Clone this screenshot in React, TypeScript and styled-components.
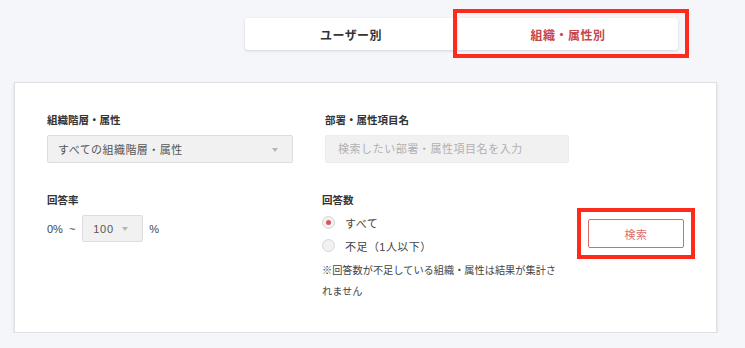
import styled, { createGlobalStyle } from 'styled-components'

const GlobalStyle = createGlobalStyle`
  html, body {
    margin: 0;
    padding: 0;
    background: #f5f6f9;
    font-family: "Liberation Sans", "Noto Sans CJK JP", sans-serif;
    color: #333;
  }
`

const App = () => {
  return (
    <>
      <GlobalStyle />
      <Page>
        <TabBar>
          <Tab>ユーザー別</Tab>
          <Tab active>
            組織・属性別
            <Highlight inset="-9px -11px -8px -5px" />
          </Tab>
        </TabBar>
        <Card>
          <Row columns="246px 244px" gap="32px">
            <Field>
              <Label>組織階層・属性</Label>
              <Select>
                <span>すべての組織階層・属性</span>
                <Caret />
              </Select>
            </Field>
            <Field>
              <Label>部署・属性項目名</Label>
              <TextInput placeholder="検索したい部署・属性項目名を入力" />
            </Field>
          </Row>
          <Row columns="275px 244px 1fr" gap="0">
            <Field>
              <Label>回答率</Label>
              <RateRow>
                <span>0%</span>
                <span>~</span>
                <SmallSelect>
                  <span>100</span>
                  <Caret />
                </SmallSelect>
                <span>%</span>
              </RateRow>
            </Field>
            <Field>
              <Label>回答数</Label>
              <RadioList>
                <RadioRow>
                  <RadioDot checked />
                  すべて
                </RadioRow>
                <RadioRow>
                  <RadioDot />
                  不足（1人以下）
                </RadioRow>
              </RadioList>
              <Note>※回答数が不足している組織・属性は結果が集計されません</Note>
            </Field>
            <ButtonCell>
              <SearchButton>
                検索
                <Highlight inset="-12px" />
              </SearchButton>
            </ButtonCell>
          </Row>
        </Card>
      </Page>
    </>
  )
}

export default App

const Page = styled.div`
  width: 703px;
  margin-left: 14px;
`

const TabBar = styled.div`
  display: flex;
  margin: 18px 39px 32px auto;
  background: #fff;
  width: 433px;
  border-radius: 3px;
  box-shadow: 0 1px 3px rgba(0, 0, 0, 0.14);
`

const Tab = styled.div<{ active?: boolean }>`
  position: relative;
  flex: ${(p) => (p.active ? '1' : '0 0 212px')};
  height: 32px;
  display: flex;
  align-items: center;
  justify-content: center;
  font-size: 12px;
  font-weight: bold;
  letter-spacing: 0.04em;
  color: ${(p) => (p.active ? '#c8474a' : '#333')};
  border-left: ${(p) => (p.active ? '1px solid #e6e6e6' : 'none')};
`

const Highlight = styled.span<{ inset: string }>`
  position: absolute;
  inset: ${(p) => p.inset};
  border: 4px solid #fe2b1c;
  pointer-events: none;
`

const Card = styled.div`
  background: #fff;
  border: 1px solid #dedfe3;
  box-shadow: 0 2px 3px rgba(0, 0, 0, 0.12);
  padding: 29px 32px 30px;
  display: flex;
  flex-direction: column;
  gap: 29px;
`

const Row = styled.div<{ columns: string; gap: string }>`
  display: grid;
  grid-template-columns: ${(p) => p.columns};
  column-gap: ${(p) => p.gap};
`

const Field = styled.div`
  display: flex;
  flex-direction: column;
`

const Label = styled.div`
  font-size: 10.5px;
  font-weight: bold;
  line-height: 16px;
  color: #333;
  margin-bottom: 7px;
`

const Select = styled.div`
  height: 28px;
  box-sizing: border-box;
  background: #f1f1f1;
  border: 1px solid #dddddd;
  border-radius: 2px;
  display: flex;
  align-items: center;
  justify-content: space-between;
  padding: 0 14px 0 10px;
  font-size: 11px;
  letter-spacing: 0.04em;
  color: #555;
`

const Caret = styled.span`
  width: 0;
  height: 0;
  border-left: 3.5px solid transparent;
  border-right: 3.5px solid transparent;
  border-top: 4px solid #b5b5b5;
  margin-top: 1px;
`

const TextInput = styled.input`
  height: 28px;
  box-sizing: border-box;
  background: #f1f1f1;
  border: 1px solid #ececec;
  border-radius: 2px;
  padding: 0 12px;
  font-family: inherit;
  font-size: 11px;
  letter-spacing: 0.05em;
  color: #555;
  outline: none;
  &::placeholder {
    color: #b0b0b0;
  }
`

const RateRow = styled.div`
  display: flex;
  align-items: center;
  gap: 6px;
  font-size: 11px;
  color: #444;
`

const SmallSelect = styled(Select)`
  width: 61px;
  height: 27px;
  padding: 0 14px 0 10px;
  margin-left: 1px;
  letter-spacing: 0.06em;
`

const RadioList = styled.div`
  display: flex;
  flex-direction: column;
  margin-top: -4px;
`

const RadioRow = styled.label`
  display: flex;
  align-items: center;
  gap: 10px;
  height: 23px;
  font-size: 11px;
  letter-spacing: 0.04em;
  color: #444;
`

const RadioDot = styled.span<{ checked?: boolean }>`
  width: 13px;
  height: 13px;
  box-sizing: border-box;
  border-radius: 50%;
  background: #f1f1f1;
  border: 1px solid #d6d6d6;
  display: flex;
  align-items: center;
  justify-content: center;
  &::after {
    content: '';
    width: 5px;
    height: 5px;
    border-radius: 50%;
    background: ${(p) => (p.checked ? '#d9575a' : 'transparent')};
  }
`

const Note = styled.p`
  margin: 3px 0 0;
  font-size: 10.2px;
  line-height: 21px;
  color: #444;
`

const ButtonCell = styled.div`
  display: flex;
  justify-content: flex-end;
  align-items: flex-start;
  padding-top: 27px;
`

const SearchButton = styled.button`
  position: relative;
  width: 96px;
  height: 29px;
  background: #fff;
  border: 1px solid #d86a6c;
  border-radius: 2px;
  color: #de6e70;
  font-family: inherit;
  font-size: 11px;
  letter-spacing: 0.05em;
  cursor: pointer;
`
